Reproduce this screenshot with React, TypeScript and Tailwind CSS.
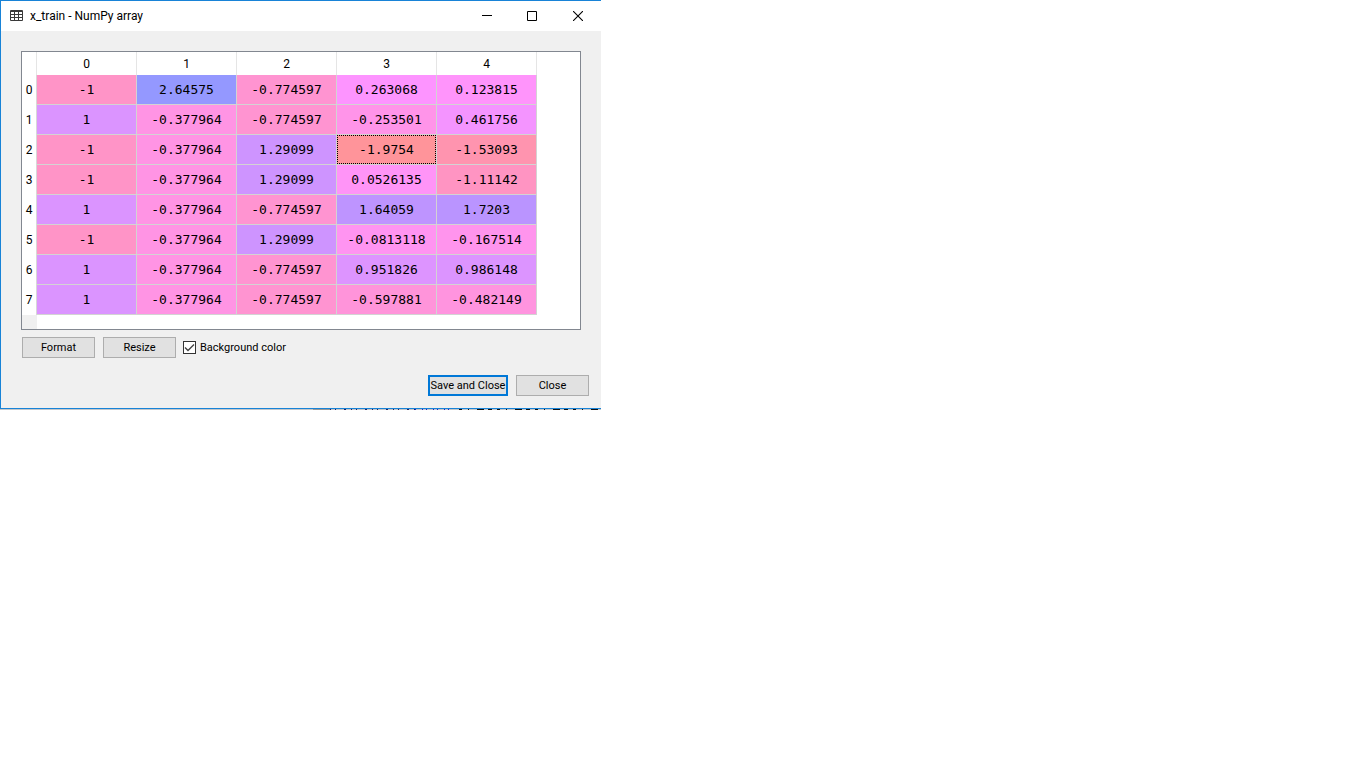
const columns = [0, 1, 2, 3, 4];

const rows: string[][] = [
  ['-1', '2.64575', '-0.774597', '0.263068', '0.123815'],
  ['1', '-0.377964', '-0.774597', '-0.253501', '0.461756'],
  ['-1', '-0.377964', '1.29099', '-1.9754', '-1.53093'],
  ['-1', '-0.377964', '1.29099', '0.0526135', '-1.11142'],
  ['1', '-0.377964', '-0.774597', '1.64059', '1.7203'],
  ['-1', '-0.377964', '1.29099', '-0.0813118', '-0.167514'],
  ['1', '-0.377964', '-0.774597', '0.951826', '0.986148'],
  ['1', '-0.377964', '-0.774597', '-0.597881', '-0.482149'],
];

const values = rows.flat().map(Number);
const max = Math.max(...values);
const min = Math.min(...values);

// Hue runs from blue (largest value) to red (smallest value).
function cellColor(value: number): string {
  const hue = 0.66 + (0.33 * (max - value)) / (max - min);
  return `hsl(${hue * 360} 100% 79%)`;
}

function TitleBar() {
  return (
    <header className="flex h-[30px] items-center bg-white pl-[9px] text-black">
      <svg className="mr-[7px] mb-[2px] shrink-0" width="13" height="11" viewBox="0 0 13 11" aria-hidden="true">
        <rect width="13" height="11" rx="1" fill="#3a3a3a" />
        <g fill="#fff">
          <path d="M1 2h3v2H1zM5 2h3v2H5zM9 2h3v2H9z" />
          <path d="M1 5h3v2H1zM5 5h3v2H5zM9 5h3v2H9z" />
          <path d="M1 8h3v2H1zM5 8h3v2H5zM9 8h3v2H9z" />
        </g>
      </svg>
      <h1 className="flex-1 text-[12px] leading-4">x_train - NumPy array</h1>
      <button type="button" aria-label="Minimize" className="flex h-full w-[45px] items-center justify-center">
        <svg width="10" height="10" viewBox="0 0 10 10"><path d="M0 4.5h10" stroke="#000" /></svg>
      </button>
      <button type="button" aria-label="Maximize" className="flex h-full w-[46px] items-center justify-center">
        <svg width="10" height="10" viewBox="0 0 10 10"><path d="M.5.5h9v9h-9z" fill="none" stroke="#000" /></svg>
      </button>
      <button type="button" aria-label="Close window" className="flex h-full w-[46px] items-center justify-center">
        <svg width="10" height="10" viewBox="0 0 10 10"><path d="M0 0l10 10M10 0L0 10" stroke="#000" strokeWidth="1.1" /></svg>
      </button>
    </header>
  );
}

function ArrayTable() {
  return (
    <div className="flex h-[279px] flex-col border border-[#828790] bg-white">
      <table className="w-[515px] table-fixed border-separate border-spacing-0 text-center text-black">
        <thead>
          <tr className="h-[23px] text-[12px] leading-4">
            <td className="w-[15px] border-r border-[#e5e5e5] p-0" />
            {columns.map((c) => (
              <th key={c} scope="col" className="border-r border-[#e5e5e5] p-0 font-normal">{c}</th>
            ))}
          </tr>
        </thead>
        <tbody>
          {rows.map((row, r) => (
            <tr key={r} className="h-[30px]">
              <th scope="row" className="border-r border-[#d8d8d8] p-0 text-[12px] leading-4 font-normal">{r}</th>
              {row.map((v, c) => (
                <td
                  key={c}
                  className="border-r border-b border-[#d3d3d3] p-0 font-['DejaVu_Sans_Mono',monospace] text-[13px] leading-4"
                  style={{ backgroundColor: cellColor(Number(v)) }}
                >
                  {r === 2 && c === 3 ? (
                    <div className="flex h-[29px] items-center justify-center border border-dotted border-black">{v}</div>
                  ) : (
                    v
                  )}
                </td>
              ))}
            </tr>
          ))}
        </tbody>
      </table>
      <div className="w-[15px] flex-1 bg-[#f0f0f0]" />
    </div>
  );
}

export default function App() {
  return (
    <div className="w-full max-w-[601px] font-[Roboto,sans-serif]">
      <main className="border-t border-b border-l border-[#1883d7] bg-[#f0f0f0]">
        <TitleBar />
        <div className="px-5 pt-5">
          <ArrayTable />
        </div>
        <div className="flex items-center gap-[7px] px-[21px] pt-[7px] text-[11px] leading-4 text-black">
          <button type="button" className="mr-px h-[21px] w-[73px] border border-[#adadad] bg-[#e1e1e1]">Format</button>
          <button type="button" className="h-[21px] w-[73px] border border-[#adadad] bg-[#e1e1e1]">Resize</button>
          <label className="flex items-center gap-1">
            <span className="grid">
              <input
                type="checkbox"
                defaultChecked
                className="peer col-start-1 row-start-1 size-[13px] appearance-none border border-[#333333] bg-white"
              />
              <svg
                className="pointer-events-none invisible col-start-1 row-start-1 peer-checked:visible"
                width="13"
                height="13"
                viewBox="0 0 13 13"
                aria-hidden="true"
              >
                <path d="M2 6.5l3 3 6-6" fill="none" stroke="#444" strokeWidth="1.4" />
              </svg>
            </span>
            Background color
          </label>
        </div>
        <div className="flex justify-end gap-2 px-3 pt-[17px] pb-3 text-[11px] leading-4 text-black">
          <button type="button" className="h-[21px] w-[80px] border-2 border-[#0078d7] bg-[#e1e1e1] whitespace-nowrap">
            Save and Close
          </button>
          <button type="button" className="h-[21px] w-[73px] border border-[#adadad] bg-[#e1e1e1]">Close</button>
        </div>
      </main>
      <svg className="block h-px w-full" viewBox="0 0 601 1" preserveAspectRatio="none" aria-hidden="true">
        <path d="M0 .5h601" stroke="#c4c8cc" />
        <path d="M313 .5h17" stroke="#999" />
        <path d="M330 .5h85" stroke="#222266" strokeDasharray="1 4 1 8 2 5" />
        <path d="M415 .5h35" stroke="#2020d0" strokeDasharray="1 6 1 3" />
        <path d="M459 .5h141" stroke="#111" strokeDasharray="3 6 1 8 7 4 4 5" />
      </svg>
    </div>
  );
}
